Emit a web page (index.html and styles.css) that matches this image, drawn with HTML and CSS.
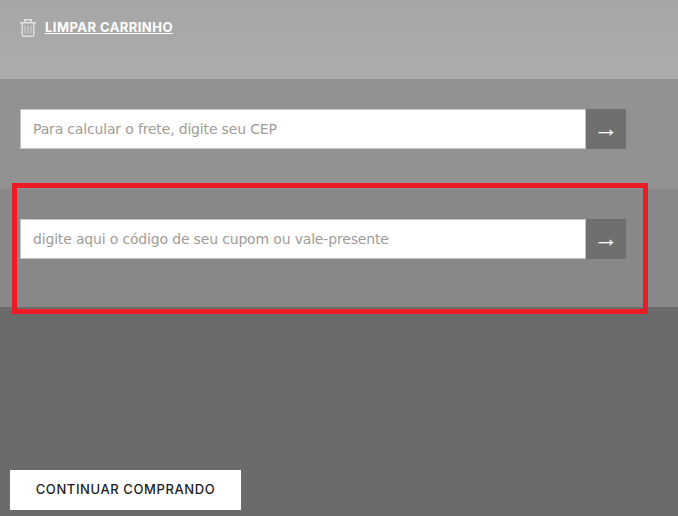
FILE: index.html
```html
<!DOCTYPE html>
<html lang="pt-BR">
<head>
  <meta charset="UTF-8">
  <meta name="viewport" content="width=device-width, initial-scale=1.0">
  <title>Carrinho</title>
  <link rel="stylesheet" href="styles.css">
</head>
<body>
  <div class="clear-cart">
    <svg class="trash-icon" width="16" height="18" viewBox="0 0 16 18" fill="none" stroke="#e2e2e2" stroke-width="1.4">
      <path d="M0 3.7h16M4.7 3.7V.8h6.6v2.9M2.2 3.7v12.6l1 1h9.6l1-1V3.7"/>
      <path d="M5 6.5v8M8 6.5v8M11 6.5v8" stroke-width="1.6" stroke="#c6c6c6"/>
    </svg>
    <a class="clear-link" href="#">LIMPAR CARRINHO</a>
  </div>

  <div class="shipping">
    <form class="field-row">
      <input class="field-input" type="text" placeholder="Para calcular o frete, digite seu CEP">
      <button class="field-btn" type="button">→</button>
    </form>
  </div>

  <div class="coupon">
    <form class="field-row">
      <input class="field-input" type="text" placeholder="digite aqui o código de seu cupom ou vale-presente">
      <button class="field-btn" type="button">→</button>
    </form>
    <div class="highlight"></div>
  </div>

  <div class="actions">
    <a class="continue-btn" href="#">CONTINUAR COMPRANDO</a>
  </div>
</body>
</html>
```

FILE: styles.css
```css
body {
  margin: 0;
  background-color: #6b6b6b;
  font-family: "Open Sans", sans-serif;
}
.clear-cart {
  display: flex;
  align-items: flex-start;
  gap: 9px;
  height: 60px;
  padding: 19px 20px 0;
  background: linear-gradient(to bottom, #a6a6a6, #acacac);
}
.clear-link {
  margin-top: 1px;
  color: #fff;
  font-family: Inter, sans-serif;
  font-size: 13px;
  font-weight: 700;
  letter-spacing: 0.45px;
  line-height: 15px;
  text-decoration: underline;
}
.shipping {
  height: 40px;
  padding: 30px 20px 40px;
  background-color: #929292;
}
.coupon {
  position: relative;
  height: 40px;
  padding: 30px 20px 48px;
  background-color: #888888;
}
.field-row {
  display: flex;
  width: 606px;
  height: 40px;
}
.field-input {
  box-sizing: border-box;
  width: 566px;
  height: 40px;
  padding: 0 12px 1px;
  border: 1px solid #c4c4c4;
  border-radius: 0;
  background-color: #fff;
  font-family: "DejaVu Sans", sans-serif;
  font-size: 14px;
  letter-spacing: -0.17px;
}
.field-input::placeholder {
  color: #a09c98;
  opacity: 1;
}
.field-btn {
  width: 40px;
  height: 40px;
  padding: 0 0 2px;
  border: 0;
  background-color: #6f6f6f;
  color: #fff;
  font-family: "Liberation Sans", sans-serif;
  font-size: 25px;
  line-height: 38px;
}
.highlight {
  position: absolute;
  left: 12px;
  top: -6px;
  width: 626px;
  height: 121px;
  border: 5px solid #ed1c24;
}
.actions {
  height: 46px;
  padding: 163px 10px 0;
}
.continue-btn {
  display: block;
  width: 231px;
  height: 40px;
  background-color: #fff;
  color: #1c1c1c;
  font-family: Inter, sans-serif;
  font-size: 13px;
  font-weight: 500;
  letter-spacing: 0.6px;
  line-height: 39px;
  text-align: center;
  text-decoration: none;
}
```
